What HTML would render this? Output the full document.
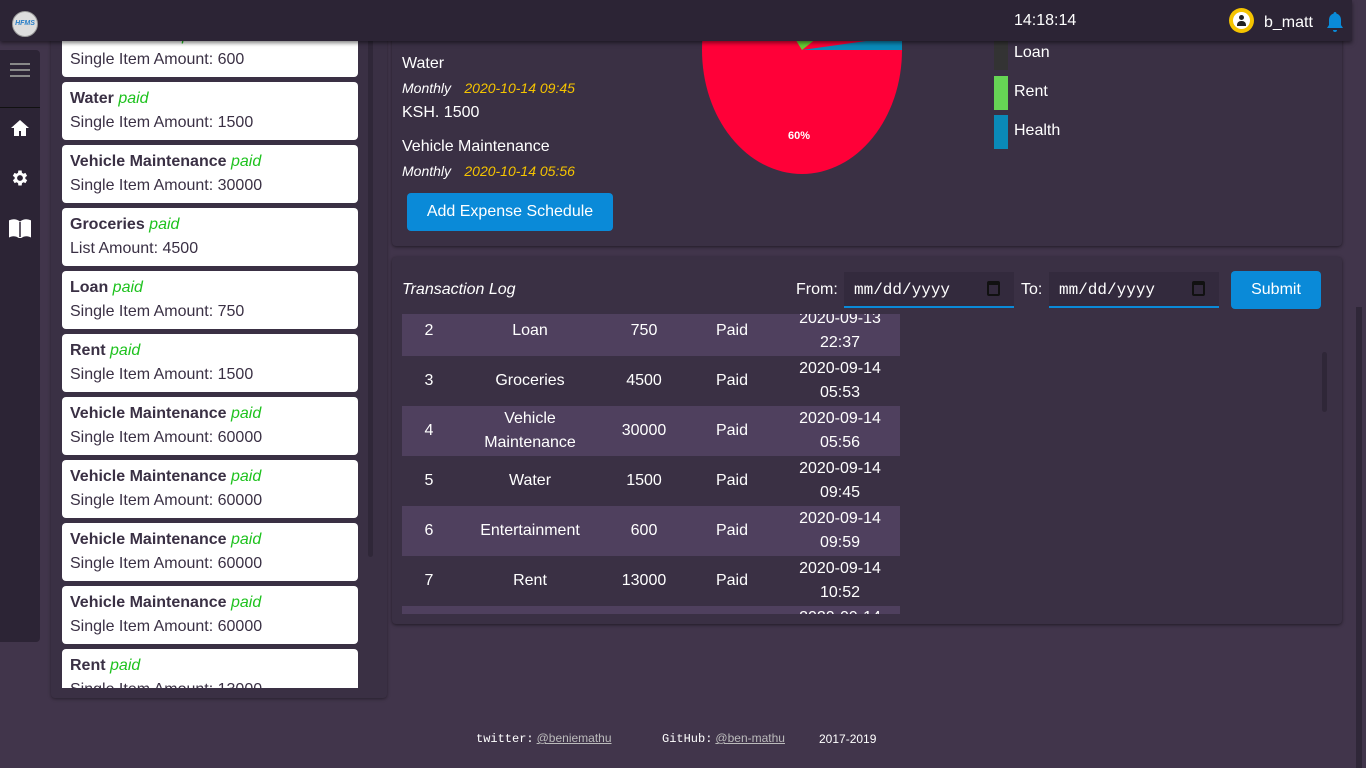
<!DOCTYPE html>
<html><head><meta charset="utf-8"><style>
*{box-sizing:border-box;margin:0;padding:0}
body{width:1366px;height:768px;overflow:hidden;background:#41354b;font-family:"Liberation Sans",Roboto,sans-serif;color:#fff;position:relative}
.top{position:absolute;left:0;top:0;width:1352px;height:41px;background:#2c2435;box-shadow:0 2px 4px rgba(0,0,0,.5);z-index:5}
.side{position:absolute;left:0;top:50px;width:40px;height:592px;background:#2c2435;border-radius:0 4px 4px 0}
.lp{position:absolute;left:51px;top:20px;width:336px;height:678px;background:#3a3044;border-radius:4px;box-shadow:0 1px 3px rgba(0,0,0,.4);overflow:hidden}
.card{position:absolute;left:11px;width:296px;height:58px;background:#fff;border-radius:4px;color:#3a3044;font-size:16px;padding:5px 8px;line-height:24px}
.card b{font-weight:bold}.card i{color:#1ec21e}
.panel{position:absolute;left:392px;width:950px;background:#3a3044;border-radius:4px;box-shadow:0 1px 3px rgba(0,0,0,.5)}
.btn{position:absolute;background:#0a8ad8;border-radius:4px;color:#fff;font-size:16px;text-align:center}
.d{position:absolute;width:170px;height:36px;background:#332a3d;border-bottom:2px solid #0a8ad8;font-family:"Liberation Mono",monospace;font-size:16px;padding:9px 10px}
.row{position:absolute;left:402px;width:498px;height:50px;font-size:16px}
.row span{position:absolute;top:0;height:50px;display:flex;align-items:center;justify-content:center;text-align:center;line-height:24px}
.s{background:#4f405e}
</style></head><body>
<div class="top">
 <div style="position:absolute;left:12px;top:11px;width:26px;height:26px;border-radius:50%;background:#ddd;border:1px solid #999;font-size:7px;color:#2a7fc8;font-weight:bold;font-style:italic;text-align:center;line-height:24px">HFMS</div>
 <div style="position:absolute;left:1014px;top:12px;font-size:16px">14:18:14</div>
 <div style="position:absolute;left:1229px;top:8px;width:25px;height:25px;border-radius:50%;background:#f5c400;"><div style="position:absolute;left:4px;top:4px;width:17px;height:17px;border-radius:50%;background:#fff"></div><div style="position:absolute;left:10px;top:7px;width:5px;height:5px;border-radius:50%;background:#222"></div><div style="position:absolute;left:8px;top:13px;width:9px;height:5px;border-radius:4px 4px 0 0;background:#222"></div></div>
 <div style="position:absolute;left:1264px;top:14px;font-size:16px">b_matt</div>
 <svg style="position:absolute;left:1325px;top:11px" width="20" height="22" viewBox="0 0 20 22"><path d="M10 1c1 0 1.5.8 1.5 1.6C14.5 3.4 16 6 16 9v5l2 3H2l2-3V9c0-3 1.5-5.6 4.5-6.4C8.5 1.8 9 1 10 1z M8 19h4a2 2 0 0 1-4 0z" fill="#0a8ad8"/></svg>
</div>
<div class="side">
 <div style="position:absolute;left:10px;top:13px;width:20px;height:2px;background:#888;box-shadow:0 6px 0 #888,0 12px 0 #888"></div>
 <div style="position:absolute;left:0;top:57px;width:40px;height:1px;background:#111"></div>
 <svg style="position:absolute;left:10px;top:69px" width="20" height="18" viewBox="0 0 20 18"><path d="M10 1 1 9h3v8h5v-5h2v5h5V9h3z" fill="#fff"/></svg>
 <svg style="position:absolute;left:10px;top:118px" width="20" height="20" viewBox="0 0 24 24"><path fill="#fff" d="M19.4 13a7.5 7.5 0 0 0 0-2l2.1-1.6-2-3.5-2.5 1a7 7 0 0 0-1.7-1L15 3h-4l-.4 2.9a7 7 0 0 0-1.700 1l-2.5-1-2 3.5L6.6 11a7.5 7.5 0 0 0 0 2l-2.1 1.6 2 3.5 2.5-1a7 7 0 0 0 1.7 1L11 21h4l.4-2.9a7 7 0 0 0 1.7-1l2.5 1 2-3.5zM13 15.5A3.5 3.5 0 1 1 13 8.5a3.5 3.5 0 0 1 0 7z" transform="translate(-1 0)"/></svg>
 <svg style="position:absolute;left:9px;top:168px" width="22" height="20" viewBox="0 0 22 20"><path d="M1 3q5-2 9 1v15q-4-3-9-1z M21 3q-5-2-9 1v15q4-3 9-1z" fill="#fff" stroke="#fff" stroke-width="2"/><path d="M11 4v15" stroke="#2c2435" stroke-width="1.5"/></svg>
</div>
<div class="lp">
 <div class="card" style="top:-1px"><b>Entertainment</b> <i>paid</i><br>Single Item Amount: 600</div>
 <div class="card" style="top:62px"><b>Water</b> <i>paid</i><br>Single Item Amount: 1500</div>
 <div class="card" style="top:125px"><b>Vehicle Maintenance</b> <i>paid</i><br>Single Item Amount: 30000</div>
 <div class="card" style="top:188px"><b>Groceries</b> <i>paid</i><br>List Amount: 4500</div>
 <div class="card" style="top:251px"><b>Loan</b> <i>paid</i><br>Single Item Amount: 750</div>
 <div class="card" style="top:314px"><b>Rent</b> <i>paid</i><br>Single Item Amount: 1500</div>
 <div class="card" style="top:377px"><b>Vehicle Maintenance</b> <i>paid</i><br>Single Item Amount: 60000</div>
 <div class="card" style="top:440px"><b>Vehicle Maintenance</b> <i>paid</i><br>Single Item Amount: 60000</div>
 <div class="card" style="top:503px"><b>Vehicle Maintenance</b> <i>paid</i><br>Single Item Amount: 60000</div>
 <div class="card" style="top:566px"><b>Vehicle Maintenance</b> <i>paid</i><br>Single Item Amount: 60000</div>
 <div class="card" style="top:629px;height:39px;border-radius:4px 4px 0 0;overflow:hidden"><b>Rent</b> <i>paid</i><br>Single Item Amount: 13000</div>
 <div style="position:absolute;left:317px;top:0;width:5px;height:537px;background:#2f2738;border-radius:3px"></div>
</div>
<div class="panel" style="top:20px;height:226px;overflow:hidden">
 <div style="position:absolute;left:10px;top:32px;font-size:16px;line-height:24px;width:220px;height:136px;overflow:hidden">
  Water<br><span style="font-size:14px;font-style:italic">Monthly</span> &nbsp; <span style="font-size:14px;font-style:italic;color:#f5c400">2020-10-14 09:45</span><br>KSH. 1500<br><div style="height:10px"></div>Vehicle Maintenance<br><span style="font-size:14px;font-style:italic">Monthly</span> &nbsp; <span style="font-size:14px;font-style:italic;color:#f5c400">2020-10-14 05:56</span><br>KSH. 60000
 </div>
 <svg style="position:absolute;left:310px;top:-94px" width="200" height="248" viewBox="0 0 200 248"><ellipse cx="100" cy="124" rx="100" ry="124" fill="#ff0038"/><path d="M100 124 L200 124 L200 110 Z" fill="#0a8ab8"/><path d="M100 124 L130 100 L85 100 Z" fill="#66cc33"/><text x="86" y="213" font-size="11" font-weight="bold" fill="#fff" font-family="Liberation Sans">60%</text></svg>
 <div style="position:absolute;left:602px;top:16px;width:14px;height:34px;background:#333"></div>
 <div style="position:absolute;left:622px;top:24px;font-size:16px">Loan</div>
 <div style="position:absolute;left:602px;top:56px;width:14px;height:34px;background:#66d455"></div>
 <div style="position:absolute;left:622px;top:63px;font-size:16px">Rent</div>
 <div style="position:absolute;left:602px;top:95px;width:14px;height:34px;background:#0a8ab8"></div>
 <div style="position:absolute;left:622px;top:102px;font-size:16px">Health</div>
</div>
<div class="btn" style="left:407px;top:193px;width:206px;height:38px;line-height:38px">Add Expense Schedule</div>
<div class="panel" style="top:257px;height:367px"></div>
<div style="position:absolute;left:402px;top:281px;font-size:16px;font-style:italic">Transaction Log</div>
<div style="position:absolute;left:796px;top:281px;font-size:16px">From:</div>
<div class="d" style="left:844px;top:272px">mm/dd/yyyy<span style="position:absolute;right:14px;top:9px;width:13px;height:15px;border:2px solid #111;border-top-width:4px;border-radius:2px"></span></div>
<div style="position:absolute;left:1021px;top:281px;font-size:16px">To:</div>
<div class="d" style="left:1049px;top:272px">mm/dd/yyyy<span style="position:absolute;right:14px;top:9px;width:13px;height:15px;border:2px solid #111;border-top-width:4px;border-radius:2px"></span></div>
<div class="btn" style="left:1231px;top:271px;width:90px;height:38px;line-height:38px">Submit</div>
<div style="position:absolute;left:402px;top:314px;width:498px;height:300px;overflow:hidden">
 <div class="row s" style="left:0;top:-8px"><span style="left:0;width:54px">2</span><span style="left:54px;width:148px">Loan</span><span style="left:202px;width:80px">750</span><span style="left:282px;width:96px">Paid</span><span style="left:378px;width:120px">2020-09-13<br>22:37</span></div>
 <div class="row" style="left:0;top:42px"><span style="left:0;width:54px">3</span><span style="left:54px;width:148px">Groceries</span><span style="left:202px;width:80px">4500</span><span style="left:282px;width:96px">Paid</span><span style="left:378px;width:120px">2020-09-14<br>05:53</span></div>
 <div class="row s" style="left:0;top:92px"><span style="left:0;width:54px">4</span><span style="left:54px;width:148px">Vehicle<br>Maintenance</span><span style="left:202px;width:80px">30000</span><span style="left:282px;width:96px">Paid</span><span style="left:378px;width:120px">2020-09-14<br>05:56</span></div>
 <div class="row" style="left:0;top:142px"><span style="left:0;width:54px">5</span><span style="left:54px;width:148px">Water</span><span style="left:202px;width:80px">1500</span><span style="left:282px;width:96px">Paid</span><span style="left:378px;width:120px">2020-09-14<br>09:45</span></div>
 <div class="row s" style="left:0;top:192px"><span style="left:0;width:54px">6</span><span style="left:54px;width:148px">Entertainment</span><span style="left:202px;width:80px">600</span><span style="left:282px;width:96px">Paid</span><span style="left:378px;width:120px">2020-09-14<br>09:59</span></div>
 <div class="row" style="left:0;top:242px"><span style="left:0;width:54px">7</span><span style="left:54px;width:148px">Rent</span><span style="left:202px;width:80px">13000</span><span style="left:282px;width:96px">Paid</span><span style="left:378px;width:120px">2020-09-14<br>10:52</span></div>
 <div class="row s" style="left:0;top:292px"><span style="left:378px;width:120px;align-items:flex-start;padding-top:0">2020-09-14</span></div>
</div>
<div style="position:absolute;left:1322px;top:352px;width:5px;height:60px;background:#2f2738;border-radius:3px"></div>
<div style="position:absolute;left:1356px;top:307px;width:6px;height:461px;background:#2f2738"></div>
<div style="position:absolute;top:731px;left:476px;font-size:12px;font-family:'Liberation Mono',monospace">twitter:<span style="font-family:'Liberation Sans';color:#bbb;text-decoration:underline;margin-left:3px">@beniemathu</span></div>
<div style="position:absolute;top:731px;left:662px;font-size:12px;font-family:'Liberation Mono',monospace">GitHub:<span style="font-family:'Liberation Sans';color:#bbb;text-decoration:underline;margin-left:3px">@ben-mathu</span></div>
<div style="position:absolute;top:732px;left:819px;font-size:12px">2017-2019</div>
</body></html>
